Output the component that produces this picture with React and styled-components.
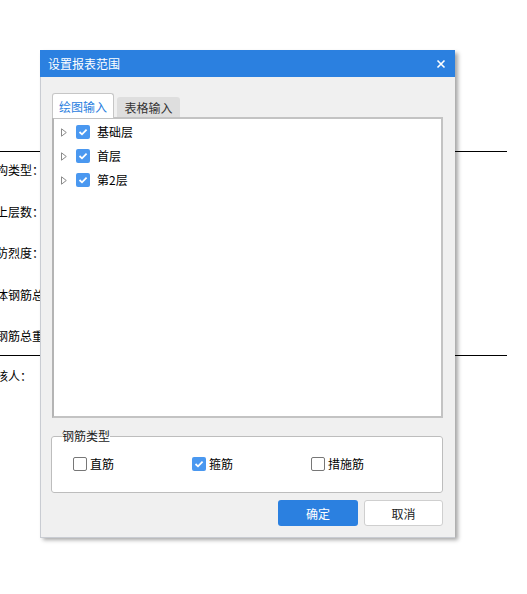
import styled, { createGlobalStyle } from "styled-components";

const GlobalStyle = createGlobalStyle`
  html, body {
    margin: 0;
    padding: 0;
    background: #fff;
  }
  body {
    font-family: "Microsoft YaHei", "Noto Sans CJK SC", "Noto Sans", sans-serif;
    font-size: 12px;
    color: #222;
  }
`;

const Screen = styled.div`
  position: relative;
  width: 527px;
  height: 594px;
  overflow: hidden;
`;

/* report page behind the dialog */
const Report = styled.div`
  width: 507px;
  padding-top: 151px;
`;

const Rule = styled.div`
  height: 1px;
  background: #000;
`;

const ReportRow = styled.div`
  height: ${(props) => props.h}px;
  padding-top: ${(props) => props.top}px;
  box-sizing: border-box;
`;

const ReportLabel = styled.span`
  display: block;
  margin-left: -16px;
  line-height: 16px;
  color: #000;
  white-space: nowrap;
`;

/* dialog */
const Dialog = styled.div`
  position: absolute;
  left: 40px;
  top: 50px;
  width: 415px;
  height: 487px;
  display: flex;
  flex-direction: column;
  background: #f0f0f0;
  box-shadow: 3px 3px 4px rgba(0, 0, 0, 0.35);
`;

const TitleBar = styled.div`
  height: 27px;
  flex: none;
  display: flex;
  align-items: center;
  justify-content: space-between;
  padding: 0 9px 0 8px;
  background: #2b80e0;
  color: #fff;
  font-size: 12px;
`;

const CloseButton = styled.span`
  display: flex;
  width: 10px;
  height: 10px;
`;

const Body = styled.div`
  flex: 1;
  display: flex;
  flex-direction: column;
  padding: 16px 12px 11px 11px;
  border-left: 1px solid #c9ccd2;
  border-bottom: 1px solid #c9ccd2;
  box-sizing: border-box;
`;

const TabRow = styled.div`
  height: 24px;
  display: flex;
  align-items: flex-end;
  gap: 3px;
  position: relative;
  z-index: 1;
`;

const Tab = styled.div`
  box-sizing: border-box;
  width: ${(props) => (props.active ? 62 : 63)}px;
  height: ${(props) => (props.active ? 25 : 20)}px;
  margin-bottom: ${(props) => (props.active ? -1 : 0)}px;
  display: flex;
  align-items: center;
  justify-content: center;
  border: ${(props) => (props.active ? "1px solid #c6c6c6" : "none")};
  border-bottom: none;
  border-radius: 3px 3px 0 0;
  background: ${(props) => (props.active ? "#fff" : "#dedede")};
  color: ${(props) => (props.active ? "#2b80e0" : "#333")};
  font-size: 12px;
`;

const Panel = styled.div`
  height: 301px;
  box-sizing: border-box;
  border: 2px solid #c3c3c3;
  border-left-color: #b4b4b4;
  background: #fff;
  padding: 1px 0 0 7px;
`;

const TreeRow = styled.div`
  height: 24px;
  display: flex;
  align-items: center;
`;

const Expander = styled.span`
  display: flex;
  width: 6px;
  margin-right: 9px;
`;

const Box = styled.span`
  flex: none;
  width: 14px;
  height: 14px;
  box-sizing: border-box;
  border-radius: 2px;
  display: flex;
  align-items: center;
  justify-content: center;
  background: ${(props) => (props.checked ? "#4a98f0" : "#fff")};
  border: ${(props) => (props.checked ? "none" : "1px solid #777")};
  margin-right: ${(props) => props.gap}px;
`;

const ItemText = styled.span`
  line-height: 16px;
  color: #000;
  font-size: 12px;
`;

const Group = styled.fieldset`
  margin: 10px 0 0 -1px;
  padding: 0;
  border: 1px solid #bdbdbd;
  border-radius: 3px;
  background: #fff;
`;

const Legend = styled.legend`
  margin-left: 10px;
  padding: 0;
  line-height: 16px;
  color: #222;
  font-size: 12px;
`;

const Options = styled.div`
  display: grid;
  grid-template-columns: repeat(3, 119px);
  padding: 12px 0 20px 21px;
`;

const Option = styled.label`
  display: flex;
  align-items: center;
  height: 16px;
`;

const Footer = styled.div`
  margin-top: 7px;
  display: flex;
  justify-content: flex-end;
  gap: 6px;
`;

const Button = styled.button`
  width: ${(props) => (props.primary ? 80 : 79)}px;
  height: 26px;
  box-sizing: border-box;
  border-radius: 3px;
  font-family: inherit;
  font-size: 12px;
  border: ${(props) => (props.primary ? "none" : "1px solid #cfcfcf")};
  background: ${(props) => (props.primary ? "#2b80e0" : "#fff")};
  color: ${(props) => (props.primary ? "#fff" : "#222")};
  padding: 0;
`;

const Check = ({ checked, gap = 3 }) => (
  <Box checked={checked} gap={gap}>
    {checked && (
      <svg width="10" height="8" viewBox="0 0 10 8">
        <path d="M1.5 4 L4 6.3 L8.6 1.6" fill="none" stroke="#fff" strokeWidth="1.8" />
      </svg>
    )}
  </Box>
);

const floors = ["基础层", "首层", "第2层"];
const types = [
  { label: "直筋", checked: false },
  { label: "箍筋", checked: true },
  { label: "措施筋", checked: false },
];

const rows = [
  { text: "结构类型：", h: 41.5, top: 10 },
  { text: "地上层数：", h: 41.5, top: 10 },
  { text: "设防烈度：", h: 41.5, top: 10 },
  { text: "整体钢筋总重(kg)：", h: 41.5, top: 10 },
  { text: "单钢筋总重(kg)：", h: 37, top: 10 },
];

export default function App() {
  return (
    <Screen>
      <GlobalStyle />
      <Report>
        <Rule />
        {rows.map((r) => (
          <ReportRow key={r.text} h={r.h} top={r.top}>
            <ReportLabel>{r.text}</ReportLabel>
          </ReportRow>
        ))}
        <Rule />
        <ReportRow h={40} top={12}>
          <ReportLabel>审核人：</ReportLabel>
        </ReportRow>
      </Report>

      <Dialog>
        <TitleBar>
          <span>设置报表范围</span>
          <CloseButton>
            <svg width="10" height="10" viewBox="0 0 10 10">
              <path d="M1.5 1.5 L8.5 8.5 M8.5 1.5 L1.5 8.5" stroke="#fff" strokeWidth="1.6" />
            </svg>
          </CloseButton>
        </TitleBar>
        <Body>
          <TabRow>
            <Tab active>绘图输入</Tab>
            <Tab>表格输入</Tab>
          </TabRow>
          <Panel>
            {floors.map((f) => (
              <TreeRow key={f}>
                <Expander>
                  <svg width="6" height="9" viewBox="0 0 6 9">
                    <path d="M0.5 0.8 L5.3 4.5 L0.5 8.2 Z" fill="none" stroke="#8a8a8a" strokeWidth="1" />
                  </svg>
                </Expander>
                <Check checked gap={7} />
                <ItemText>{f}</ItemText>
              </TreeRow>
            ))}
          </Panel>
          <Group>
            <Legend>钢筋类型</Legend>
            <Options>
              {types.map((t) => (
                <Option key={t.label}>
                  <Check checked={t.checked} gap={3} />
                  <ItemText>{t.label}</ItemText>
                </Option>
              ))}
            </Options>
          </Group>
          <Footer>
            <Button primary>确定</Button>
            <Button>取消</Button>
          </Footer>
        </Body>
      </Dialog>
    </Screen>
  );
}
